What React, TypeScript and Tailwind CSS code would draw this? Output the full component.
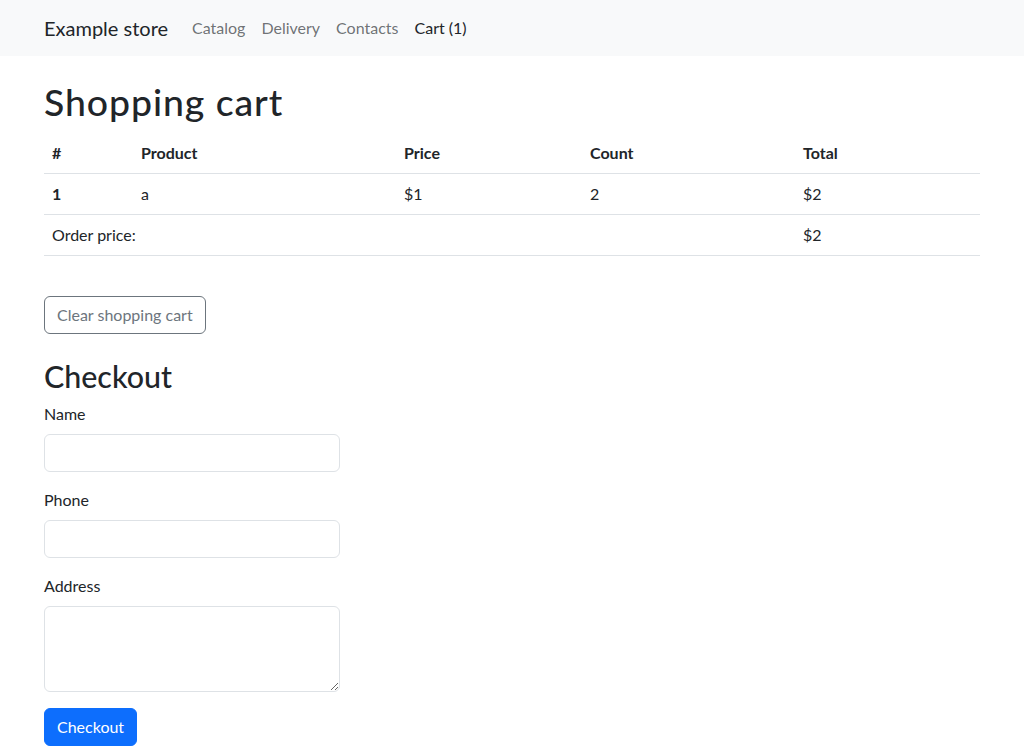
const items = [{ id: 1, name: "a", price: 1, count: 2 }];

export default function App() {
  const orderPrice = items.reduce((s, i) => s + i.price * i.count, 0);

  return (
    <div className="min-h-screen bg-white text-[16px] leading-6 text-[#212529] font-['Lato',sans-serif]">
      {/* Navbar */}
      <nav className="bg-[#f8f9fa] py-2">
        <div className="mx-auto flex w-[960px] items-center px-3">
          <a href="#" className="mr-4 py-[5px] text-[20px] leading-[30px] text-[#212529]">
            Example store
          </a>
          <ul className="flex">
            <li><a href="#" className="block px-2 py-2 text-[rgba(33,37,41,0.65)]">Catalog</a></li>
            <li><a href="#" className="block px-2 py-2 text-[rgba(33,37,41,0.65)]">Delivery</a></li>
            <li><a href="#" className="block px-2 py-2 text-[rgba(33,37,41,0.65)]">Contacts</a></li>
            <li><a href="#" className="block px-2 py-2 text-[#212529]">Cart (1)</a></li>
          </ul>
        </div>
      </nav>

      <div className="mx-auto w-[960px] px-3">
        <h1 className="mt-6 mb-2 text-[37.4px] font-medium leading-[1.2] tracking-[0.025em]">Shopping cart</h1>

        <table className="mb-4 w-full border-collapse text-left">
          <thead>
            <tr className="border-b border-[#dee2e6]">
              <th className="w-[89px] p-2 font-bold">#</th>
              <th className="w-[263px] p-2 font-bold">Product</th>
              <th className="w-[186px] p-2 font-bold">Price</th>
              <th className="w-[213px] p-2 font-bold">Count</th>
              <th className="p-2 font-bold">Total</th>
            </tr>
          </thead>
          <tbody>
            {items.map((item) => (
              <tr key={item.id} className="border-b border-[#dee2e6]">
                <th className="p-2 font-bold">{item.id}</th>
                <td className="p-2">{item.name}</td>
                <td className="p-2">${item.price}</td>
                <td className="p-2">{item.count}</td>
                <td className="p-2">${item.price * item.count}</td>
              </tr>
            ))}
            <tr className="border-b border-[#dee2e6]">
              <td colSpan={4} className="p-2">Order price:</td>
              <td className="p-2">${orderPrice}</td>
            </tr>
          </tbody>
        </table>

        <button className="mt-6 rounded-md border border-[#6c757d] px-3 py-[6px] text-[#6c757d]">
          Clear shopping cart
        </button>

        <h2 className="mt-6 mb-2 text-[30.4px] font-medium leading-[1.2]">Checkout</h2>

        <form className="w-[296px]" onSubmit={(e) => e.preventDefault()}>
          <div className="mb-4">
            <label className="mb-2 block">Name</label>
            <input className="block h-[38px] w-full rounded-md border border-[#dee2e6] px-3 py-[6px] outline-none" />
          </div>
          <div className="mb-4">
            <label className="mb-2 block">Phone</label>
            <input className="block h-[38px] w-full rounded-md border border-[#dee2e6] px-3 py-[6px] outline-none" />
          </div>
          <div className="mb-4">
            <label className="mb-2 block">Address</label>
            <textarea rows={3} className="block h-[86px] w-full rounded-md border border-[#dee2e6] px-3 py-[6px] outline-none" />
          </div>
          <button type="submit" className="rounded-md border border-[#0d6efd] bg-[#0d6efd] px-3 py-[6px] text-white">
            Checkout
          </button>
        </form>
      </div>
    </div>
  );
}
